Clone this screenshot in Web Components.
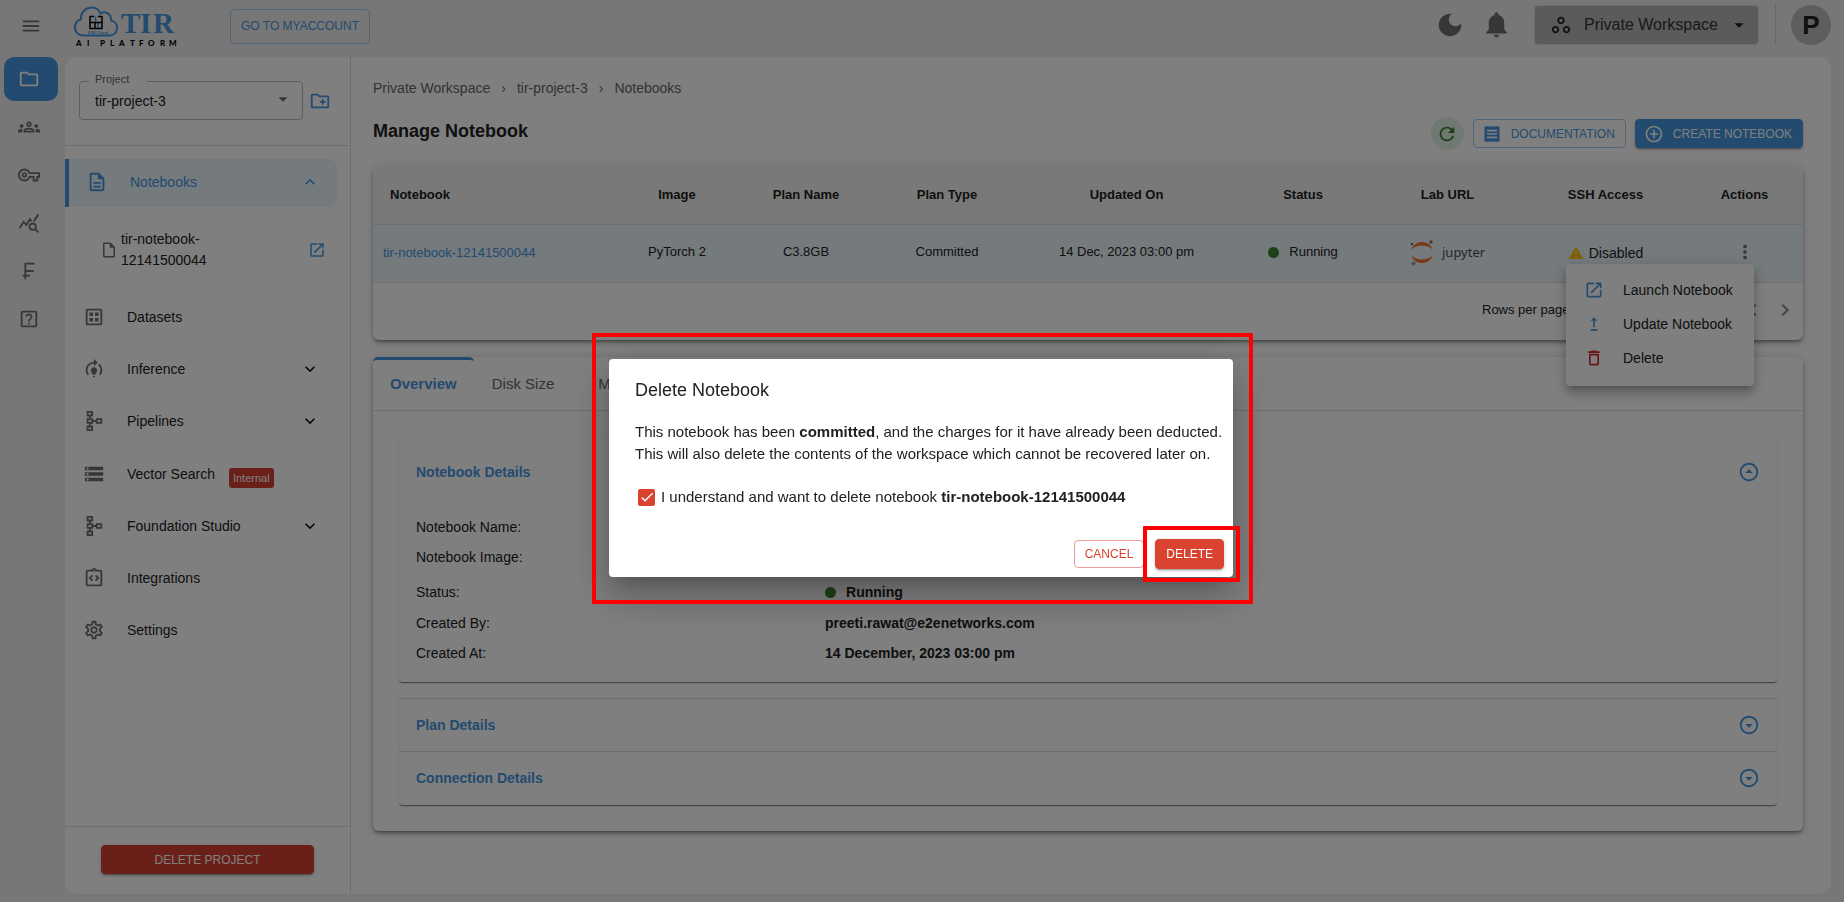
<!DOCTYPE html>
<html lang="en">
<head>
<meta charset="utf-8">
<meta name="viewport" content="width=device-width, initial-scale=1">
<title>Manage Notebook</title>
<style>
  :root {
    --blue: #4596de;
    --blue-soft: #a0caf0;
    --blue-tint: #eaf4fb;
    --red: #d9432f;
    --ink: #212121;
    --muted: #666666;
    --icon: #6e6e6e;
    --line: #dddddd;
    --chrome: #eeeeee;
    --card-shadow: 0 3px 3px -2px rgba(0,0,0,.3), 0 3px 4px 0 rgba(0,0,0,.2), 0 1px 8px 0 rgba(0,0,0,.16);
  }
  body {
    margin: 0;
    font-family: "Liberation Sans", Arial, sans-serif;
    font-size: 14px;
    line-height: 20px;
    color: var(--ink);
    background: var(--chrome);
  }
</style>
</head>
<body>
<tir-app></tir-app>

<script>
const ICONS = {
  menu: 'M3 18h18v-2H3v2zm0-5h18v-2H3v2zm0-7v2h18V6H3z',
  folder: 'M9.17 6l2 2H20v10H4V6h5.17M10 4H4c-1.1 0-1.99.9-1.99 2L2 18c0 1.1.9 2 2 2h16c1.1 0 2-.9 2-2V8c0-1.1-.9-2-2-2h-8l-2-2z',
  groups: 'M4 13c1.1 0 2-.9 2-2s-.9-2-2-2-2 .9-2 2 .9 2 2 2zm1.13 1.1c-.37-.06-.74-.1-1.13-.1-.99 0-1.93.21-2.78.58C.48 14.9 0 15.62 0 16.43V18h4.5v-1.61c0-.83.23-1.61.63-2.29zM20 13c1.1 0 2-.9 2-2s-.9-2-2-2-2 .9-2 2 .9 2 2 2zm4 3.43c0-.81-.48-1.53-1.22-1.85-.85-.37-1.79-.58-2.78-.58-.39 0-.76.04-1.13.1.4.68.63 1.46.63 2.29V18H24v-1.57zm-7.76-2.78c-1.17-.52-2.61-.9-4.24-.9s-3.07.39-4.24.9C6.68 14.13 6 15.21 6 16.39V18h12v-1.61c0-1.18-.68-2.26-1.76-2.74zM8.07 16c.09-.23.13-.39.91-.69.97-.38 1.99-.56 3.02-.56s2.05.18 3.02.56c.77.3.81.46.91.69H8.07zM12 8c.55 0 1 .45 1 1s-.45 1-1 1-1-.45-1-1 .45-1 1-1m0-2c-1.66 0-3 1.34-3 3s1.34 3 3 3 3-1.34 3-3-1.34-3-3-3z',
  key: 'M22 19h-6v-4h-2.68c-1.14 2.42-3.6 4-6.32 4-3.86 0-7-3.14-7-7s3.14-7 7-7c2.72 0 5.17 1.58 6.32 4H24v6h-2v4zm-4-2h2v-4h2v-2H11.94l-.23-.67C11.01 8.34 9.11 7 7 7c-2.76 0-5 2.24-5 5s2.24 5 5 5c2.11 0 4.01-1.34 4.71-3.33l.23-.67H18v4zM7 15c-1.65 0-3-1.35-3-3s1.35-3 3-3 3 1.35 3 3-1.35 3-3 3zm0-4c-.55 0-1 .45-1 1s.45 1 1 1 1-.45 1-1-.45-1-1-1z',
  stats: 'M19.88 18.47c.44-.7.7-1.51.7-2.39 0-2.49-2.01-4.5-4.5-4.5s-4.5 2.01-4.5 4.5 2.01 4.5 4.49 4.5c.88 0 1.7-.26 2.39-.7L21.58 23 23 21.58l-3.12-3.11zm-3.8.11c-1.38 0-2.5-1.12-2.5-2.5s1.12-2.5 2.5-2.5 2.5 1.12 2.5 2.5-1.12 2.5-2.5 2.5zm-.36-8.5c-.74.02-1.45.18-2.1.45l-.55-.83-3.8 6.18-3.01-3.52-3.63 5.81L1 17l5-8 3 3.5L13 6l2.72 4.08zm2.59.5c-.64-.28-1.33-.45-2.05-.49L21.38 2 23 3.18l-4.69 7.4z',
  franc: 'M18 5V3H7v13H5v2h2v3h2v-3h4v-2H9v-3h8v-2H9V5z',
  help: 'M19 3H5c-1.1 0-2 .9-2 2v14c0 1.1.9 2 2 2h14c1.1 0 2-.9 2-2V5c0-1.1-.9-2-2-2zm0 16H5V5h14v14zM12 15.9a1.1 1.1 0 1 0 0 2.2 1.1 1.1 0 0 0 0-2.2zM12 6C9.9 6 8.4 7.3 8.1 9.1l1.8.5c.2-1 .9-1.8 2.1-1.8 1.1 0 2 .8 2 1.8 0 1.700-2.900 2.200-2.900 5.200h1.800c0-2 2.900-2.600 2.900-5.200C15.800 7.500 14.200 6 12 6z',
  doc: 'M8 16h8v2H8zm0-4h8v2H8zm6-10H6c-1.1 0-2 .9-2 2v16c0 1.1.89 2 1.99 2H18c1.1 0 2-.9 2-2V8l-6-6zm4 18H6V4h7v5h5v11z',
  file: 'M14 2H6c-1.1 0-1.99.9-1.99 2L4 20c0 1.1.89 2 1.99 2H18c1.1 0 2-.9 2-2V8l-6-6zM6 20V4h7v5h5v11H6z',
  open: 'M19 19H5V5h7V3H5c-1.11 0-2 .9-2 2v14c0 1.1.89 2 2 2h14c1.1 0 2-.9 2-2v-7h-2v7zM14 3v2h3.59l-9.83 9.83 1.41 1.41L19 6.41V10h2V3h-7z',
  dataset: 'M11 7H7v4h4zm6 0h-4v4h4zm-6 6H7v4h4zm6 0h-4v4h4zM19 3H5c-1.1 0-2 .9-2 2v14c0 1.1.9 2 2 2h14c1.1 0 2-.9 2-2V5c0-1.1-.9-2-2-2zm0 16H5V5h14v14z',
  training: 'M15.5 13.5c0 2-2.5 3.5-2.5 5h-2c0-1.5-2.5-3-2.5-5 0-1.93 1.57-3.5 3.5-3.5s3.500 1.570 3.500 3.500zm-2.500 6h-2V21h2v-1.500zm6-6.500c0 1.680-.590 3.210-1.580 4.420l1.420 1.420C20.180 17.270 21 15.230 21 13c0-2.740-1.230-5.190-3.160-6.840l-1.420 1.420C17.990 8.860 19 10.820 19 13zm-3-8l-4-4v3c-4.970 0-9 4.030-9 9 0 2.230.820 4.270 2.160 5.840l1.420-1.420C5.590 16.210 5 14.680 5 13c0-3.860 3.140-7 7-7v3l4-4z',
  schema: 'M14 9v2h-3V9H8.500V7H11V1H4v6h2.500v2H4v6h2.500v2H4v6h7v-6H8.500v-2H11v-2h3v2h7V9h-7zM6 3h3v2H6V3zm3 18H6v-2h3v2zm0-8H6v-2h3v2zm10 0h-3v-2h3v2z',
  storage: 'M2 20h20v-4H2v4zm2-3h2v2H4v-2zM2 4v4h20V4H2zm4 3H4V5h2v2zm-4 7h20v-4H2v4zm2-3h2v2H4v-2z',
  integration: 'M11 14.17 8.83 12 11 9.83 9.59 8.41 6 12l3.590 3.590zM14.410 15.590 18 12l-3.590-3.590L13 9.830 15.170 12 13 14.170zM19 3h-4.180C14.400 1.840 13.300 1 12 1s-2.400.840-2.820 2H5c-.140 0-.270.010-.400.040-.390.080-.740.280-1.010.550-.180.180-.330.400-.430.640-.100.230-.160.490-.160.770v14c0 1.100.900 2 2 2h14c1.100 0 2-.900 2-2V5c0-1.100-.900-2-2-2zm-7-.250c.410 0 .750.340.750.750s-.340.750-.750.750-.750-.340-.750-.750.340-.750.750-.750zM19 19H5V5h14v14z',
  settings: 'M19.43 12.98c.04-.32.07-.64.07-.98 0-.34-.03-.66-.07-.98l2.11-1.65c.19-.15.24-.42.12-.64l-2-3.46c-.09-.16-.26-.25-.44-.25-.06 0-.12.01-.17.03l-2.49 1c-.52-.4-1.08-.73-1.69-.98l-.38-2.65C14.46 2.18 14.25 2 14 2h-4c-.25 0-.46.18-.49.42l-.38 2.65c-.61.25-1.17.59-1.69.98l-2.49-1c-.06-.02-.12-.03-.18-.03-.17 0-.34.09-.43.25l-2 3.46c-.13.22-.07.49.12.64l2.11 1.65c-.04.32-.07.65-.07.98 0 .33.03.66.07.98l-2.11 1.65c-.19.15-.24.42-.12.64l2 3.46c.09.16.26.25.44.25.06 0 .12-.01.17-.03l2.49-1c.52.4 1.08.73 1.69.98l.38 2.65c.03.24.24.42.49.42h4c.25 0 .46-.18.49-.42l.38-2.65c.61-.25 1.17-.59 1.69-.98l2.49 1c.06.02.12.03.18.03.17 0 .34-.09.43-.25l2-3.46c.12-.22.07-.49-.12-.64l-2.11-1.65zm-1.98-1.71c.04.31.05.52.05.73 0 .21-.02.43-.05.73l-.14 1.13.89.7 1.08.84-.7 1.21-1.27-.51-1.04-.42-.9.68c-.43.32-.84.56-1.25.73l-1.06.43-.16 1.13-.2 1.35h-1.4l-.19-1.35-.16-1.13-1.06-.43c-.43-.18-.83-.41-1.23-.71l-.91-.7-1.06.43-1.27.51-.7-1.21 1.08-.84.89-.7-.14-1.13c-.03-.31-.05-.54-.05-.74s.02-.43.05-.73l.14-1.13-.89-.7-1.08-.84.7-1.21 1.27.51 1.04.42.9-.68c.43-.32.84-.56 1.25-.73l1.06-.43.16-1.13.2-1.35h1.39l.19 1.35.16 1.13 1.06.43c.43.18.83.41 1.23.71l.91.7 1.06-.43 1.27-.51.7 1.21-1.07.85-.89.7.14 1.13zM12 8c-2.21 0-4 1.79-4 4s1.79 4 4 4 4-1.79 4-4-1.79-4-4-4zm0 6c-1.1 0-2-.9-2-2s.9-2 2-2 2 .9 2 2-.9 2-2 2z',
  more: 'M16.59 8.59 12 13.17 7.41 8.59 6 10l6 6 6-6z',
  less: 'm12 8-6 6 1.41 1.41L12 10.83l4.59 4.58L18 14z',
  newFolder: 'M20 6h-8l-2-2H4c-1.11 0-1.99.89-1.99 2L2 18c0 1.11.89 2 2 2h16c1.11 0 2-.89 2-2V8c0-1.11-.89-2-2-2zm0 12H4V6h5.17l2 2H20v10zm-8-4h2v2h2v-2h2v-2h-2v-2h-2v2h-2z',
  moon: 'M12 3c-4.97 0-9 4.03-9 9s4.03 9 9 9 9-4.03 9-9c0-.46-.04-.92-.1-1.36-.98 1.37-2.58 2.26-4.4 2.26-2.98 0-5.4-2.42-5.4-5.4 0-1.81.89-3.42 2.26-4.4-.44-.06-.9-.1-1.36-.1z',
  bell: 'M12 22c1.1 0 2-.9 2-2h-4c0 1.1.89 2 2 2zm6-6v-5c0-3.07-1.64-5.64-4.5-6.32V4c0-.83-.67-1.5-1.5-1.5s-1.5.67-1.5 1.5v.68C7.63 5.36 6 7.92 6 11v5l-2 2v1h16v-1l-2-2z',
  workspaces: 'M6 13c-2.2 0-4 1.8-4 4s1.8 4 4 4 4-1.8 4-4-1.8-4-4-4zm0 6c-1.1 0-2-.9-2-2s.9-2 2-2 2 .9 2 2-.9 2-2 2zM12 3C9.8 3 8 4.8 8 7s1.8 4 4 4 4-1.8 4-4-1.8-4-4-4zm0 6c-1.1 0-2-.9-2-2s.9-2 2-2 2 .9 2 2-.9 2-2 2zm6 4c-2.2 0-4 1.8-4 4s1.8 4 4 4 4-1.8 4-4-1.8-4-4-4zm0 6c-1.1 0-2-.9-2-2s.9-2 2-2 2 .9 2 2-.9 2-2 2z',
  caret: 'm7 10 5 5 5-5z',
  refresh: 'M17.65 6.35C16.2 4.9 14.21 4 12 4c-4.42 0-7.99 3.58-7.99 8s3.57 8 7.99 8c3.73 0 6.84-2.55 7.73-6h-2.08c-.82 2.33-3.04 4-5.65 4-3.31 0-6-2.69-6-6s2.69-6 6-6c1.66 0 3.14.69 4.22 1.78L13 11h7V4l-2.35 2.35z',
  receipt: 'M18 17H6v-2h12v2zm0-4H6v-2h12v2zm0-4H6V7h12v2zM3 22l1.5-1.5L6 22l1.5-1.5L9 22l1.5-1.5L12 22l1.5-1.5L15 22l1.5-1.5L18 22l1.5-1.5L21 22V2l-1.5 1.5L18 2l-1.5 1.5L15 2l-1.5 1.5L12 2l-1.5 1.5L9 2 7.5 3.5 6 2 4.5 3.5 3 2v20z',
  add: 'M13 7h-2v4H7v2h4v4h2v-4h4v-2h-4V7zm-1-5C6.48 2 2 6.48 2 12s4.48 10 10 10 10-4.48 10-10S17.52 2 12 2zm0 18c-4.41 0-8-3.59-8-8s3.59-8 8-8 8 3.59 8 8-3.59 8-8 8z',
  warning: 'M1 21h22L12 2 1 21zm12-3h-2v-2h2v2zm0-4h-2v-4h2v4z',
  dots: 'M12 8c1.1 0 2-.9 2-2s-.9-2-2-2-2 .9-2 2 .9 2 2 2zm0 2c-1.1 0-2 .9-2 2s.9 2 2 2 2-.9 2-2-.9-2-2-2zm0 6c-1.1 0-2 .9-2 2s.9 2 2 2 2-.9 2-2-.9-2-2-2z',
  upgrade: 'M16 18v2H8v-2h8zM11 7.99V16h2V7.99h3L12 4 8 7.99h3z',
  trash: 'M6 19c0 1.1.9 2 2 2h8c1.1 0 2-.9 2-2V7H6v12zM8 9h8v10H8V9zm7.5-5-1-1h-5l-1 1H5v2h14V4z',
  circleDown: 'M12 4c4.410 0 8 3.590 8 8s-3.590 8-8 8-8-3.590-8-8 3.590-8 8-8m0-2C6.480 2 2 6.480 2 12s4.480 10 10 10 10-4.480 10-10S17.520 2 12 2zm0 13-4-4h8z',
  circleUp: 'M12 4c4.410 0 8 3.590 8 8s-3.590 8-8 8-8-3.590-8-8 3.590-8 8-8m0-2C6.480 2 2 6.480 2 12s4.480 10 10 10 10-4.480 10-10S17.520 2 12 2zm0 7-4 4h8z',
  right: 'M8.59 16.59 13.17 12 8.59 7.41 10 6l6 6-6 6z',
  left: 'M15.41 7.41 10.83 12l4.58 4.59L14 18l-6-6 6-6z',
  check: 'M9 16.17 4.83 12l-1.42 1.41L9 19 21 7l-1.410-1.410z'
};

const define = (name, html, setup) => {
  const template = document.createElement('template');
  template.innerHTML = html;
  customElements.define(name, class extends HTMLElement {
    connectedCallback() {
      if (this.shadowRoot) return;
      this.attachShadow({ mode: 'open' }).append(template.content.cloneNode(true));
      if (setup) setup.call(this, this.shadowRoot);
    }
  });
};

/* Single-path icon: <ui-icon name="menu" size="22"> */
define('ui-icon', `
  <style>
    :host { display: inline-flex; flex: none; }
    svg { display: block; fill: currentColor; }
  </style>
  <svg viewBox="0 0 24 24" aria-hidden="true"><path/></svg>
`, function (root) {
  const size = this.getAttribute('size') || '22';
  const svg = root.querySelector('svg');
  svg.setAttribute('width', size);
  svg.setAttribute('height', size);
  svg.firstElementChild.setAttribute('d', ICONS[this.getAttribute('name')]);
});

/* Upper-case action button; tone and variant come from attributes */
define('ui-button', `
  <style>
    :host { display: inline-flex; --tone: var(--blue); --edge: var(--blue-soft); }
    :host([tone="red"]) { --tone: var(--red); --edge: #ec9a9a; }
    button {
      flex: 1; display: flex; align-items: center; justify-content: center; gap: 9px;
      height: var(--button-height, 29px); padding: 0 10px; box-sizing: border-box;
      border: 1px solid var(--edge); border-radius: 4px; background: transparent;
      color: var(--tone); font: 12px/20px "Liberation Sans", Arial, sans-serif;
      text-transform: uppercase; white-space: nowrap; cursor: pointer;
    }
    :host([start-icon]) button { padding-left: 8px; }
    :host([variant="contained"]) button {
      border-color: var(--tone); background: var(--tone); color: #fff;
      box-shadow: 0 3px 1px -2px rgba(0,0,0,.2), 0 2px 2px 0 rgba(0,0,0,.14), 0 1px 5px 0 rgba(0,0,0,.12);
    }
  </style>
  <button type="button"><slot></slot></button>
`);

define('tir-logo', `
  <style>:host { display: block; } svg { display: block; }</style>
  <svg width="106" height="42" viewBox="0 0 106 42" role="img" aria-label="TIR AI Platform">
    <path d="M11 29.500C5 29.500 1.500 25.500 2 20.500 2.300 17 4.800 14.300 7.800 13.500 7.300 7 12 2 18 1.500 22.500 1.200 26 4 27.500 7.500 32.500 4.500 38.500 8 38 14.500 42 15.300 44.500 18.500 44 22.500 43.500 26.500 40.500 29.500 36.500 29.500Z" fill="none" stroke="#4596de" stroke-width="2"/>
    <g fill="none" stroke-width="1.500">
      <path d="M22.500 10.500v5M25 16.500v5.500" stroke="#4596de"/>
      <path d="M21 10.500h-4v12h4M17.500 16.500h4M25 10.500h4v12h-7v-6h7" stroke="#000"/>
    </g>
    <text x="15" y="28" font-family="Liberation Sans, Arial, sans-serif" font-size="4" font-weight="700" fill="#4596de">E2E Cloud</text>
    <text x="48 67 80" y="27" font-family="Liberation Serif, Times New Roman, serif" font-size="29" font-weight="700" fill="#4596de">TIR</text>
    <text x="3 14 27 37 46 57 66 75 87 96" y="40" font-family="Lato, Liberation Sans, sans-serif" font-size="8" font-weight="900" fill="#000">AIPLATFORM</text>
  </svg>
`);

define('jupyter-mark', `
  <style>:host { display: inline-flex; } svg { display: block; }</style>
  <svg width="76" height="26" viewBox="0 0 76 26" role="img" aria-label="Jupyter">
    <path d="M1.500 9.500C3 4.500 7.500 2 12 2s9 2.500 10.500 7.500C20 6.800 16 5.500 12 5.500S4 6.800 1.500 9.500zM1.500 15.500C3 20.500 7.500 23 12 23s9-2.500 10.500-7.500C20 18.200 16 19.500 12 19.500S4 18.200 1.500 15.500z" fill="#f37726"/>
    <circle cx="21" cy="2" r="1.700" fill="#767677"/>
    <circle cx="2" cy="4" r="1.200" fill="#616262"/>
    <circle cx="3.500" cy="23.500" r="2" fill="#9e9e9e"/>
    <text x="32" y="17" font-family="Noto Sans, Open Sans, sans-serif" font-size="13" fill="#4e4e4e">jupyter</text>
  </svg>
`);

define('app-header', `
  <style>
    :host { display: flex; align-items: center; height: 57px; padding: 0 13px 8px 20px; box-sizing: border-box; color: var(--icon); }
    button { border: 0; padding: 0; margin: 0; background: none; color: inherit; font: inherit; display: flex; align-items: center; cursor: pointer; }
    .menu { padding-top: 2px; }
    tir-logo { margin: 5px 0 0 31px; }
    .account { margin: 3px 0 0 51px; --button-height: 35px; }
    .spacer { flex: 1; }
    .moon { margin-right: 16px; }
    .bell { margin-right: 22px; }
    .workspace {
      height: 40px; width: 225px; box-sizing: border-box; padding: 0 8px 0 15px;
      border: 1px solid #dcdcdc; border-radius: 4px; background: #b6b6b6; color: #333;
      font-size: 16px;
    }
    .workspace span { flex: 1; text-align: left; padding-left: 12px; }
    .workspace ui-icon { color: #222; }
    .rule { width: 1px; height: 41px; margin: 0 15px 0 16px; background: #d0d0d0; }
    .avatar { width: 40px; height: 40px; justify-content: center; border-radius: 50%; background: #bdbdbd; color: #212121; font-size: 26px; font-weight: 700; }
  </style>
  <button class="menu" type="button" aria-label="Toggle navigation"><ui-icon name="menu" size="22"></ui-icon></button>
  <tir-logo></tir-logo>
  <ui-button class="account">Go to MyAccount</ui-button>
  <div class="spacer"></div>
  <button class="moon" type="button" aria-label="Dark mode"><ui-icon name="moon" size="30"></ui-icon></button>
  <button class="bell" type="button" aria-label="Notifications"><ui-icon name="bell" size="31"></ui-icon></button>
  <button class="workspace" type="button"><ui-icon name="workspaces" size="22"></ui-icon><span>Private Workspace</span><ui-icon name="caret" size="22"></ui-icon></button>
  <div class="rule"></div>
  <button class="avatar" type="button" aria-label="Account">P</button>
`);

define('nav-rail', `
  <style>
    :host { display: flex; flex-direction: column; gap: 4px; width: 54px; padding: 0 7px 0 4px; color: var(--icon); }
    a { display: flex; align-items: center; justify-content: center; height: 44px; padding-right: 4px; border-radius: 10px; color: inherit; }
    a[aria-current] { background: var(--blue); color: #fff; }
  </style>
  <a href="#projects" aria-current="page" aria-label="Projects"><ui-icon name="folder"></ui-icon></a>
  <a href="#team" aria-label="Team"><ui-icon name="groups"></ui-icon></a>
  <a href="#tokens" aria-label="API tokens"><ui-icon name="key"></ui-icon></a>
  <a href="#usage" aria-label="Usage"><ui-icon name="stats"></ui-icon></a>
  <a href="#billing" aria-label="Billing"><ui-icon name="franc"></ui-icon></a>
  <a href="#help" aria-label="Help"><ui-icon name="help"></ui-icon></a>
`);

define('nav-item', `
  <style>
    :host { display: block; }
    a { display: flex; align-items: center; min-height: 52px; padding: 0 30px 0 18px; color: inherit; text-decoration: none; }
    .icon { color: var(--icon); margin-right: 22px; }
    .label { flex: 1; display: flex; align-items: center; gap: 14px; }
    .chevron { color: #111; }
    :host([active]) a { min-height: 46px; margin-right: 12px; padding: 0 18px 2px 17px; border-left: 4px solid var(--blue); border-radius: 0 10px 10px 0; background: var(--blue-tint); color: var(--blue); }
    :host([active]) .icon { color: var(--blue); }
    :host([active]) .chevron { color: var(--blue); }
  </style>
  <a href="#"><ui-icon class="icon"></ui-icon><span class="label"><slot></slot></span></a>
`, function (root) {
  root.querySelector('.icon').setAttribute('name', this.getAttribute('icon'));
  root.querySelector('a').setAttribute('href', '#' + this.getAttribute('icon'));
  const chevron = this.getAttribute('chevron');
  if (chevron) {
    root.querySelector('a').insertAdjacentHTML('beforeend', '<ui-icon class="chevron" size="20" name="' + chevron + '"></ui-icon>');
  }
  const icon = root.querySelector('.icon');
  icon.shadowRoot && icon.shadowRoot.querySelector('path').setAttribute('d', ICONS[this.getAttribute('icon')]);
});

define('side-nav', `
  <style>
    :host { display: flex; flex-direction: column; width: 285px; flex: none; border-right: 1px solid var(--line); }
    .project { display: flex; align-items: center; gap: 6px; height: 87px; padding: 0 14px 1px; border-bottom: 1px solid var(--line); }
    .field { position: relative; display: grid; width: 224px; }
    .field label { position: absolute; top: -10px; left: 10px; padding: 0 18px 0 6px; background: #fff; color: var(--muted); font-size: 11px; line-height: 16px; }
    .field select { grid-area: 1/1; height: 39px; padding: 0 32px 0 15px; border: 1px solid #bbb; border-radius: 4px; background: transparent; color: var(--ink); font: 14px/20px "Liberation Sans", Arial, sans-serif; appearance: none; }
    .field ui-icon { grid-area: 1/1; align-self: center; justify-self: end; margin: 0 9px 4px 0; color: var(--icon); pointer-events: none; }
    button { border: 0; padding: 0; background: none; color: var(--blue); display: flex; cursor: pointer; }
    nav { flex: 1; padding-top: 13px; }
    .sub { display: flex; align-items: center; height: 84px; padding: 2px 24px 0 35px; box-sizing: border-box; line-height: 21px; }
    .sub a { flex: 1; display: flex; align-items: center; gap: 3px; color: inherit; text-decoration: none; }
    .sub a ui-icon { color: var(--icon); }
    .sub .name { width: 100px; }
    .tall { padding-top: 1px; }
    .badge { margin-top: 7px; padding: 0 4px; border-radius: 3px; background: #d63e32; color: #fff; font-size: 11px; line-height: 20px; }
    footer { display: grid; padding: 18px 36px 20px; border-top: 1px solid var(--line); }
    footer ui-button { --tone: #d63e32; }
  </style>
  <div class="project">
    <div class="field">
      <select id="project"><option>tir-project-3</option></select>
      <label for="project">Project</label>
      <ui-icon name="caret" size="22"></ui-icon>
    </div>
    <button type="button" aria-label="New project"><ui-icon name="newFolder"></ui-icon></button>
  </div>
  <nav>
    <nav-item icon="doc" chevron="less" active>Notebooks</nav-item>
    <div class="sub">
      <a href="#notebook"><ui-icon name="file" size="18"></ui-icon><span class="name">tir-notebook-<br>12141500044</span></a>
      <button type="button" aria-label="Launch notebook"><ui-icon name="open" size="18"></ui-icon></button>
    </div>
    <nav-item icon="dataset">Datasets</nav-item>
    <nav-item icon="training" chevron="more">Inference</nav-item>
    <nav-item icon="schema" chevron="more">Pipelines</nav-item>
    <nav-item icon="storage" class="tall">Vector Search <span class="badge">Internal</span></nav-item>
    <nav-item icon="schema" chevron="more">Foundation Studio</nav-item>
    <nav-item icon="integration">Integrations</nav-item>
    <nav-item icon="settings">Settings</nav-item>
  </nav>
  <footer><ui-button tone="red" variant="contained">Delete Project</ui-button></footer>
`);

define('status-dot', `
  <style>
    :host { display: inline-flex; align-items: center; gap: 10px; }
    :host::before { content: ""; width: 11px; height: 11px; border-radius: 50%; background: #3c8132; }
  </style>
  <slot></slot>
`);

define('row-menu', `
  <style>
    :host { position: absolute; z-index: 2; top: 98px; right: 49px; width: 188px; height: 122px; box-sizing: border-box; padding: 9px 0; border-radius: 4px; background: #fff;
      box-shadow: 0 5px 5px -3px rgba(0,0,0,.2), 0 8px 10px 1px rgba(0,0,0,.14), 0 3px 14px 2px rgba(0,0,0,.12); }
    button { display: flex; align-items: center; gap: 19px; width: 100%; height: 34px; padding: 0 18px; border: 0; background: none; color: var(--ink); font: 14px/20px "Liberation Sans", Arial, sans-serif; text-align: left; white-space: nowrap; cursor: pointer; }
    ui-icon { color: var(--blue); }
    .danger { color: #d32f2f; }
  </style>
  <button type="button" role="menuitem"><ui-icon name="open" size="20"></ui-icon>Launch Notebook</button>
  <button type="button" role="menuitem"><ui-icon name="upgrade" size="20"></ui-icon>Update Notebook</button>
  <button type="button" role="menuitem"><ui-icon name="trash" size="20" class="danger"></ui-icon>Delete</button>
`);

define('notebook-table', `
  <style>
    :host { display: block; position: relative; border-radius: 6px; background: #fff; box-shadow: var(--card-shadow); }
    table { width: 100%; table-layout: fixed; border-collapse: separate; border-spacing: 0; font-size: 13px; line-height: 20px; }
    th, td { box-sizing: border-box; padding: 0; text-align: center; border-bottom: 1px solid var(--line); white-space: nowrap; }
    th { height: 59px; padding-bottom: 1px; background: #f3f3f3; font-weight: 700; }
    td { height: 58px; padding-bottom: 3px; background: var(--blue-tint); }
    th:first-child { text-align: left; padding-left: 17px; border-radius: 6px 0 0 0; }
    th:last-child { border-radius: 0 6px 0 0; }
    td:first-child { text-align: left; padding-left: 10px; }
    td a { color: var(--blue); text-decoration: none; }
    td > * { vertical-align: middle; }
    .lab { display: inline-flex; padding-top: 2px; }
    .ssh { display: inline-flex; align-items: center; gap: 5px; font-size: 14px; padding-top: 2px; }
    .ssh ui-icon { color: #ffc107; }
    button { display: inline-flex; border: 0; padding: 0; background: none; color: var(--icon); cursor: pointer; }
    .pager { display: flex; align-items: center; justify-content: flex-end; gap: 8px; height: 57px; padding: 0 6px 3px; box-sizing: border-box; font-size: 13px; white-space: nowrap; }
    .pager select { border: 0; background: none; font: inherit; color: inherit; }
    .pager .range { margin: 0 26px 0 20px; }
    .pager label { flex: none; width: 107px; }
    .pager button { color: #888; }
  </style>
  <table>
    <colgroup>
      <col style="width:246px"><col style="width:116px"><col style="width:142px"><col style="width:140px"><col style="width:219px">
      <col style="width:134px"><col style="width:155px"><col style="width:161px"><col style="width:117px">
    </colgroup>
    <thead><tr><th>Notebook</th><th>Image</th><th>Plan Name</th><th>Plan Type</th><th>Updated On</th><th>Status</th><th>Lab URL</th><th>SSH Access</th><th>Actions</th></tr></thead>
    <tbody><tr>
      <td><a href="#notebook">tir-notebook-12141500044</a></td>
      <td>PyTorch 2</td><td>C3.8GB</td><td>Committed</td><td>14 Dec, 2023 03:00 pm</td>
      <td><status-dot>Running</status-dot></td>
      <td><a class="lab" href="#lab" aria-label="Open Jupyter lab"><jupyter-mark></jupyter-mark></a></td>
      <td><span class="ssh"><ui-icon name="warning" size="16"></ui-icon>Disabled</span></td>
      <td><button type="button" aria-label="Actions"><ui-icon name="dots" size="22"></ui-icon></button></td>
    </tr></tbody>
  </table>
  <div class="pager">
    <label for="rows">Rows per page:</label>
    <select id="rows"><option>10</option></select>
    <span class="range">1–1 of 1</span>
    <button type="button" aria-label="Previous page"><ui-icon name="left" size="24"></ui-icon></button>
    <button type="button" aria-label="Next page"><ui-icon name="right" size="24"></ui-icon></button>
  </div>
  <row-menu role="menu"></row-menu>
`);

define('detail-section', `
  <style>
    :host { display: block; }
    button { display: flex; align-items: center; justify-content: space-between; width: 100%; height: 52px; padding: 0 17px; border: 0; background: none; color: var(--blue); font: 700 14px/20px "Liberation Sans", Arial, sans-serif; text-align: left; cursor: pointer; }
    :host([open]) button { height: 73px; padding-bottom: 1px; }
  </style>
  <button type="button"><slot name="title"></slot><ui-icon></ui-icon></button>
  <slot></slot>
`, function (root) {
  const open = this.hasAttribute('open');
  root.querySelector('button').setAttribute('aria-expanded', open);
  const icon = root.querySelector('ui-icon');
  const name = open ? 'circleUp' : 'circleDown';
  icon.setAttribute('name', name);
  icon.shadowRoot && icon.shadowRoot.querySelector('path').setAttribute('d', ICONS[name]);
});

define('notebook-details', `
  <style>
    :host { display: block; border-radius: 6px; background: #fff; box-shadow: var(--card-shadow); }
    .tabs { display: flex; gap: 1px; height: 53px; border-bottom: 1px solid var(--line); }
    .tabs button { padding: 0 17px 2px; border: 0; border-top: 3px solid transparent; background: none; color: var(--muted); font: 15px/20px "Liberation Sans", Arial, sans-serif; cursor: pointer; }
    .tabs button[aria-selected="true"] { border-color: var(--blue); border-radius: 5px 5px 0 0; color: var(--blue); font-weight: 700; }
    .tabs button:nth-child(3) { padding: 0 26px 2px; }
    .panel { display: flex; flex-direction: column; gap: 16px; padding: 25px 26px 26px; }
    .group { border-radius: 4px; background: #fff; box-shadow: 0 2px 1px -1px rgba(0,0,0,.3), 0 1px 1px 0 rgba(0,0,0,.2), 0 1px 3px 0 rgba(0,0,0,.12); }
    .group.closed { border-top: 1px solid var(--line); }
    .group detail-section + detail-section { border-top: 1px solid var(--line); padding-bottom: 1px; }
    dl { margin: 0; padding: 3px 17px 14px; }
    dl div { display: grid; grid-template-columns: 7fr 16fr; line-height: 30px; }
    dl .gap { margin-top: 5px; }
    dd { margin: 0; font-weight: 700; }
  </style>
  <div class="tabs" role="tablist">
    <button type="button" role="tab" aria-selected="true">Overview</button>
    <button type="button" role="tab">Disk Size</button>
    <button type="button" role="tab">Misc</button>
  </div>
  <div class="panel">
    <div class="group">
      <detail-section open><span slot="title">Notebook Details</span>
        <dl>
          <div><dt>Notebook Name:</dt><dd></dd></div>
          <div><dt>Notebook Image:</dt><dd></dd></div>
          <div class="gap"><dt>Status:</dt><dd><status-dot>Running</status-dot></dd></div>
          <div><dt>Created By:</dt><dd>preeti.rawat@e2enetworks.com</dd></div>
          <div><dt>Created At:</dt><dd>14 December, 2023 03:00 pm</dd></div>
        </dl>
      </detail-section>
    </div>
    <div class="group closed">
      <detail-section><span slot="title">Plan Details</span></detail-section>
      <detail-section><span slot="title">Connection Details</span></detail-section>
    </div>
  </div>
`);

define('main-view', `
  <style>
    :host { display: block; flex: 1; min-width: 0; padding: 21px 28px 0 22px; }
    .crumbs { display: flex; gap: 11px; color: var(--muted); }
    .crumbs a { color: inherit; text-decoration: none; }
    .bar { display: flex; align-items: center; gap: 9px; margin: 19px 0 16px; }
    h1 { flex: 1; margin: 0 0 6px; font-size: 18px; line-height: 24px; }
    .refresh { width: 33px; height: 33px; display: flex; align-items: center; justify-content: center; border: 0; padding: 0; border-radius: 50%; background: #e3efe3; color: #3c8132; cursor: pointer; }
    notebook-table { margin-bottom: 17px; }
  </style>
  <nav class="crumbs" aria-label="Breadcrumb"><a href="#workspace">Private Workspace</a><span>›</span><a href="#project">tir-project-3</a><span>›</span><a href="#notebooks">Notebooks</a></nav>
  <div class="bar">
    <h1>Manage Notebook</h1>
    <button class="refresh" type="button" aria-label="Refresh"><ui-icon name="refresh" size="22"></ui-icon></button>
    <ui-button start-icon><ui-icon name="receipt" size="20"></ui-icon>Documentation</ui-button>
    <ui-button start-icon variant="contained"><ui-icon name="add" size="20"></ui-icon>Create Notebook</ui-button>
  </div>
  <notebook-table></notebook-table>
  <notebook-details></notebook-details>
`);

define('delete-dialog', `
  <style>
    :host { position: fixed; inset: 0; z-index: 10; display: flex; align-items: center; justify-content: center; padding: 34px 2px 0 0; box-sizing: border-box; background: rgba(0,0,0,.5); }
    .frame { position: relative; width: 624px; }
    .paper { border-radius: 4px; background: #fff;
      box-shadow: 0 11px 15px -7px rgba(0,0,0,.2), 0 24px 38px 3px rgba(0,0,0,.14), 0 9px 46px 8px rgba(0,0,0,.12); }
    h2 { margin: 0; padding: 19px 26px 0; font-size: 18px; line-height: 24px; font-weight: 400; }
    p { margin: 0; padding: 19px 0 0 26px; font-size: 15px; line-height: 22px; white-space: nowrap; }
    .confirm { display: flex; align-items: center; gap: 6px; padding: 21px 0 0 29px; font-size: 15px; line-height: 22px; }
    .box { display: grid; place-items: center; }
    .box > * { grid-area: 1/1; }
    .box input { appearance: none; width: 17px; height: 17px; margin: 0; border: 2px solid var(--muted); border-radius: 2px; }
    .box input:checked { border-color: var(--red); background: var(--red); }
    .box ui-icon { color: #fff; pointer-events: none; }
    .actions { display: flex; justify-content: flex-end; align-items: center; gap: 11px; padding: 31px 9px 8px; }
    .cancel { --button-height: 28px; }
    .delete { position: relative; --button-height: 30px; }
    .mark { position: absolute; border: 4px solid #f00; border-radius: 1px; pointer-events: none; }
    .mark.outer { inset: -26px -20px -27px -17px; }
    .mark.inner { inset: -13px -16px -13px -12px; }
  </style>
  <div class="frame">
    <div class="paper" role="dialog" aria-modal="true" aria-labelledby="title">
      <h2 id="title">Delete Notebook</h2>
      <p>This notebook has been <b>committed</b>, and the charges for it have already been deducted.<br>This will also delete the contents of the workspace which cannot be recovered later on.</p>
      <div class="confirm">
        <span class="box"><input id="agree" type="checkbox" checked><ui-icon name="check" size="16"></ui-icon></span>
        <label for="agree">I understand and want to delete notebook <b>tir-notebook-12141500044</b></label>
      </div>
      <div class="actions">
        <ui-button class="cancel" tone="red">Cancel</ui-button>
        <div class="delete"><ui-button tone="red" variant="contained">Delete</ui-button><div class="mark inner"></div></div>
      </div>
    </div>
    <div class="mark outer"></div>
  </div>
`);

define('tir-app', `
  <style>
    :host { display: flex; flex-direction: column; min-height: 100vh; }
    .body { flex: 1; display: flex; padding: 0 13px 8px 0; }
    .surface { flex: 1; min-width: 0; display: flex; border-radius: 12px; background: #fff; }
  </style>
  <app-header></app-header>
  <div class="body">
    <nav-rail></nav-rail>
    <div class="surface">
      <side-nav></side-nav>
      <main-view></main-view>
    </div>
  </div>
  <delete-dialog></delete-dialog>
`);
</script>
</body>
</html>
